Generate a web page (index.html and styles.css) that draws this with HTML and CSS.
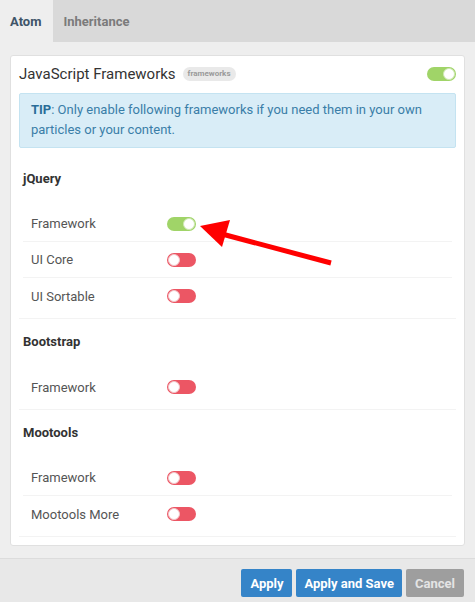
FILE: index.html
```html
<!DOCTYPE html>
<html lang="en">
<head>
    <meta charset="UTF-8">
    <meta name="viewport" content="width=device-width, initial-scale=1.0">
    <title>Atom Settings</title>
    <link rel="stylesheet" href="styles.css">
</head>
<body>
    <div class="tabs">
        <div class="tab active">Atom</div>
        <div class="tab">Inheritance</div>
    </div>

    <div class="content">
        <div class="card">
            <div class="card-header">
                <span class="card-title">JavaScript Frameworks</span>
                <span class="badge">frameworks</span>
                <span class="toggle on header-toggle"></span>
            </div>

            <p class="tip"><b>TIP</b>: Only enable following frameworks if you need them in your own particles or your content.</p>

            <div class="section">
                <div class="section-title">jQuery</div>
                <div class="row">
                    <span class="row-label">Framework</span>
                    <span class="toggle on"></span>
                </div>
                <div class="row">
                    <span class="row-label">UI Core</span>
                    <span class="toggle"></span>
                </div>
                <div class="row last">
                    <span class="row-label">UI Sortable</span>
                    <span class="toggle"></span>
                </div>
            </div>

            <div class="section">
                <div class="section-title">Bootstrap</div>
                <div class="row last">
                    <span class="row-label">Framework</span>
                    <span class="toggle"></span>
                </div>
            </div>

            <div class="section">
                <div class="section-title">Mootools</div>
                <div class="row">
                    <span class="row-label">Framework</span>
                    <span class="toggle"></span>
                </div>
                <div class="row last">
                    <span class="row-label">Mootools More</span>
                    <span class="toggle"></span>
                </div>
            </div>
        </div>
    </div>

    <div class="footer">
        <button class="btn btn-primary btn-apply">Apply</button>
        <button class="btn btn-primary">Apply and Save</button>
        <button class="btn btn-cancel">Cancel</button>
    </div>

    <!-- annotation arrow drawn over the screenshot -->
    <svg class="arrow" width="475" height="602" viewBox="0 0 475 602">
        <line x1="331" y1="263" x2="222" y2="234" stroke="#ff0000" stroke-width="5"/>
        <polygon points="200,226 230,220 222,247" fill="#ff0000"/>
    </svg>
</body>
</html>
```

FILE: styles.css
```css
body {
    font-family: Roboto, 'Liberation Sans', sans-serif;
    font-size: 13px;
    color: #555;
    background-color: #eeeeee;
    margin: 0;
    padding: 0;
    width: 475px;
    height: 602px;
    position: relative;
    overflow: hidden;
}

.tabs {
    display: flex;
    height: 42px;
    background-color: #d9d9d9;
}

.tab {
    display: flex;
    align-items: center;
    padding: 0 12px 0 10px;
    font-weight: bold;
    color: #7b7b7b;
}

.tab.active {
    background-color: #eeeeee;
    color: #3e5468;
}

.content {
    padding: 13px 10px 12px;
}

.card {
    background-color: #fff;
    border: 1px solid #e0e0e0;
    border-radius: 3px;
    padding: 8px;
}

.card-header {
    display: flex;
    align-items: center;
    height: 20px;
    margin-bottom: 9px;
}

.card-title {
    font-size: 15px;
    color: #333;
}

.badge {
    margin-left: 7px;
    background-color: #e9e9e9;
    color: #9a9a9a;
    font-size: 8px;
    font-weight: bold;
    padding: 2px 5px;
    border-radius: 7px;
    line-height: 10px;
}

.header-toggle {
    margin-left: auto;
}

.tip {
    margin: 0 0 8px;
    background-color: #d9edf7;
    border: 1px solid #c4e3f1;
    border-radius: 2px;
    color: #3a7ea8;
    line-height: 20px;
    padding: 6px 11px 7px;
}

.tip b {
    color: #2a6d98;
}

.section {
    border-bottom: 1px solid #f3f3f3;
    padding-bottom: 4px;
}

.section-title {
    font-weight: bold;
    color: #333;
    line-height: 18px;
    padding: 14px 4px 18px;
}

.row {
    display: flex;
    align-items: center;
    height: 35px;
    margin: 0 4px;
    border-bottom: 1px solid #f3f3f3;
}

.row.last {
    border-bottom: none;
    height: 36px;
}

.row-label {
    width: 136px;
    padding-left: 8px;
}

.toggle {
    display: inline-block;
    position: relative;
    width: 29px;
    height: 14px;
    border-radius: 8px;
    background-color: #ec5664;
}

.toggle::after {
    content: '';
    position: absolute;
    top: 1px;
    left: 1px;
    width: 12px;
    height: 12px;
    border-radius: 50%;
    background-color: #fff;
    box-sizing: border-box;
    border: 1px solid #f2c4c8;
}

.toggle.on {
    background-color: #a0d468;
}

.toggle.on::after {
    left: auto;
    right: 1px;
    border-color: #cfe8b4;
}

.footer {
    border-top: 1px solid #dcdcdc;
    background-color: #e8e8e8;
    height: 44px;
    display: flex;
    justify-content: flex-end;
    align-items: flex-start;
    gap: 4px;
    padding: 10px 11px 0 0;
    box-sizing: border-box;
}

.btn {
    font-family: inherit;
    font-size: 13px;
    font-weight: bold;
    height: 28px;
    border: none;
    border-radius: 2px;
    padding: 0 8px;
    cursor: pointer;
}

.btn-apply {
    min-width: 51px;
}

.btn-primary {
    background-color: #3584c8;
    color: #fff;
}

.btn-cancel {
    background-color: #9e9e9e;
    color: #e4e4e4;
    padding: 0 9px;
}

.arrow {
    position: absolute;
    top: 0;
    left: 0;
    pointer-events: none;
}
```
